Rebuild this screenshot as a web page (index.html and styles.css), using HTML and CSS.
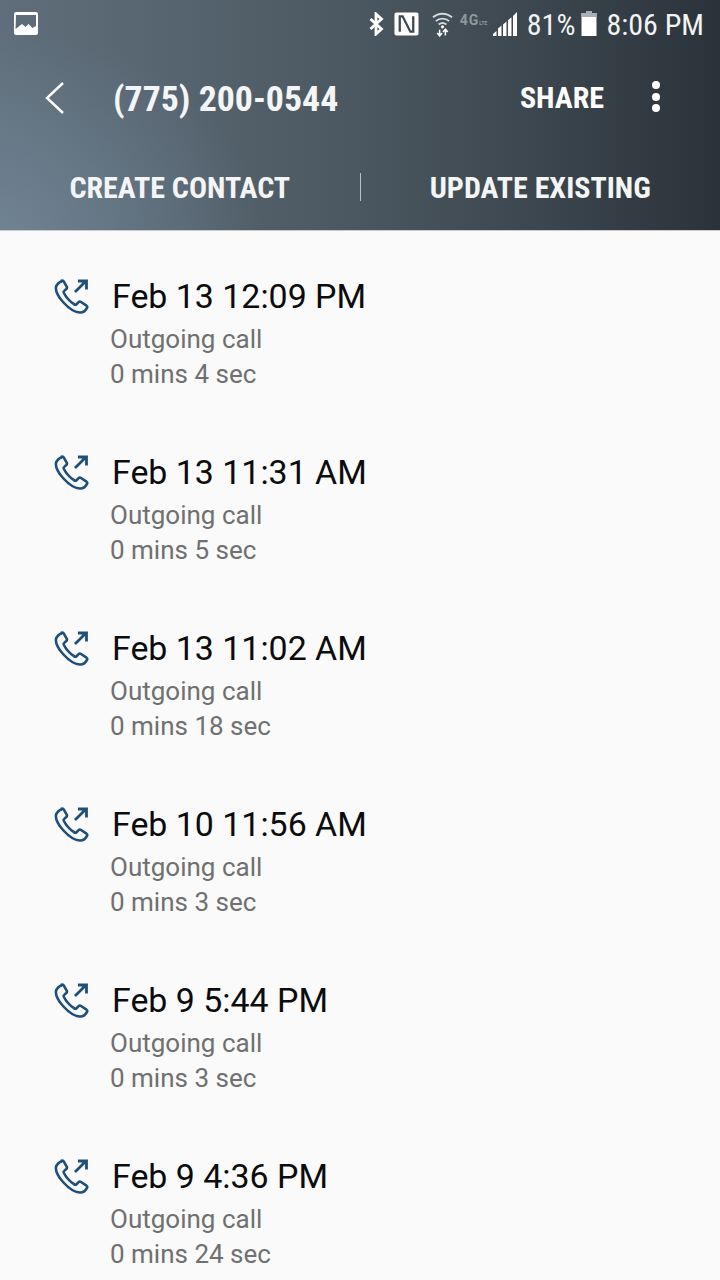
FILE: index.html
```html
<!DOCTYPE html>
<html lang="en">
<head>
  <meta charset="UTF-8" />
  <meta name="viewport" content="width=device-width, initial-scale=1.0" />
  <title>Call history</title>
  <link rel="stylesheet" href="styles.css">
</head>
<body>
  <header class="top">
    <div class="status">
      <svg class="pic-icon" width="24" height="24" viewBox="0 0 24 24">
        <rect x="0" y="0" width="24" height="23" rx="2" fill="#fff"/>
        <path d="M2 3h20v11l-3.500 2-4-4-3 3-3.500-3-6.500 5z" fill="#5d6c78"/>
      </svg>
      <div class="status-right">
        <svg class="ic-bt" width="17" height="24" viewBox="0 0 16 24">
          <path d="M2 7l11 10-5.500 5V2L13 7 2 17" fill="none" stroke="#fff" stroke-width="2.800"/>
        </svg>
        <svg class="ic-nfc" width="25" height="26" viewBox="0 0 26 24">
          <rect x="0.500" y="0" width="25" height="24" rx="2" fill="#fff"/>
          <path d="M6 20V4h3l8 16h3V4" fill="none" stroke="#3e4a53" stroke-width="2.400"/>
        </svg>
        <svg class="ic-wifi" width="21" height="26" viewBox="0 0 22 26">
          <path d="M1 6c6-5 14-5 20 0M4 10c4-3.500 10-3.500 14 0M7 13.500c2.500-2 5.500-2 8 0" fill="none" stroke="#d5d9dc" stroke-width="2"/>
          <circle cx="11" cy="16" r="1.600" fill="#fff"/>
          <path d="M8 19v6M5.500 22.500l2.500 3 2.500-3M14 25v-6M11.500 21.500l2.500-3 2.500 3" fill="none" stroke="#fff" stroke-width="1.600"/>
        </svg>
        <span class="net">4G<small>LTE</small></span>
        <svg class="ic-signal" width="24" height="24" viewBox="0 0 24 24">
          <path d="M0 24v-2l3.500-3v5zM5 24v-7.500l3.500-3V24zM10 24V12.500l3.500-3V24zM15 24V8.200l3.500-3V24zM20 24V3.900L24 0v24z" fill="#fff"/>
        </svg>
        <span class="stat-text pct">81%</span>
        <svg class="ic-batt" width="16" height="26" viewBox="0 0 16 26">
          <path d="M5 0h6v2h4.500v23H.5V2H5z" fill="#fff"/>
          <path d="M5 0h6v2h4.500v4H.5V2H5z" fill="#a9b0b5"/>
        </svg>
        <span class="stat-text">8:06 PM</span>
      </div>
    </div>

    <div class="bar">
      <svg class="back" width="20" height="32" viewBox="0 0 20 32">
        <path d="M18 1L2 16l16 15" fill="none" stroke="#fff" stroke-width="2.400"/>
      </svg>
      <h1 class="number">(775) 200-0544</h1>
      <span class="share">SHARE</span>
      <div class="more"><i></i><i></i><i></i></div>
    </div>

    <div class="actions">
      <span class="action">CREATE CONTACT</span>
      <span class="divider"></span>
      <span class="action">UPDATE EXISTING</span>
    </div>
  </header>

  <main class="log">
    <div class="call">
      <svg class="call-icon" viewBox="0 0 36 36"><use href="#outgoing"/></svg>
      <div>
        <div class="when">Feb 13 12:09 PM</div>
        <div class="sub">Outgoing call</div>
        <div class="sub">0 mins 4 sec</div>
      </div>
    </div>
    <div class="call">
      <svg class="call-icon" viewBox="0 0 36 36"><use href="#outgoing"/></svg>
      <div>
        <div class="when">Feb 13 11:31 AM</div>
        <div class="sub">Outgoing call</div>
        <div class="sub">0 mins 5 sec</div>
      </div>
    </div>
    <div class="call">
      <svg class="call-icon" viewBox="0 0 36 36"><use href="#outgoing"/></svg>
      <div>
        <div class="when">Feb 13 11:02 AM</div>
        <div class="sub">Outgoing call</div>
        <div class="sub">0 mins 18 sec</div>
      </div>
    </div>
    <div class="call">
      <svg class="call-icon" viewBox="0 0 36 36"><use href="#outgoing"/></svg>
      <div>
        <div class="when">Feb 10 11:56 AM</div>
        <div class="sub">Outgoing call</div>
        <div class="sub">0 mins 3 sec</div>
      </div>
    </div>
    <div class="call">
      <svg class="call-icon" viewBox="0 0 36 36"><use href="#outgoing"/></svg>
      <div>
        <div class="when">Feb 9 5:44 PM</div>
        <div class="sub">Outgoing call</div>
        <div class="sub">0 mins 3 sec</div>
      </div>
    </div>
    <div class="call">
      <svg class="call-icon" viewBox="0 0 36 36"><use href="#outgoing"/></svg>
      <div>
        <div class="when">Feb 9 4:36 PM</div>
        <div class="sub">Outgoing call</div>
        <div class="sub">0 mins 24 sec</div>
      </div>
    </div>
  </main>

  <svg class="defs" width="0" height="0">
    <symbol id="outgoing" viewBox="0 0 36 36">
      <path d="M7.500 2.500c-2 .5-5 3-5.500 5.500-.5 4 2.500 10 7.500 15.500s11 9.500 16 10c3 .3 6-2 7.500-4.500.5-1 .2-1.800-.5-2.300l-5.500-3.700c-.9-.6-1.700-.5-2.400.2l-2.100 2.100c-.6.6-1.300.6-2 .2-2.500-1.500-4.500-3.200-6.500-5.500-1.800-2-3.200-4-4.200-6.200-.3-.8-.2-1.400.4-1.900l2.100-1.900c.7-.7.8-1.500.4-2.300l-3-5.300c-.5-.9-1.300-1-2.200-.6z" fill="none" stroke="#1f4e79" stroke-width="2.600" stroke-linejoin="round"/>
      <path d="M21 13L32 2M24 2h8.500v8.500" fill="none" stroke="#1f4e79" stroke-width="2.800"/>
    </symbol>
  </svg>
</body>
</html>
```

FILE: styles.css
```css
body {
  margin: 0;
  background-color: #fafafa;
  font-family: Roboto, "Liberation Sans", sans-serif;
}
.top {
  height: 230px;
  background:
    radial-gradient(ellipse 260px 200px at 0 100%, rgba(125, 148, 168, 0.55), rgba(125, 148, 168, 0)),
    linear-gradient(90deg, #5f6e7a 0%, #56646f 25%, #4b5760 50%, #3d4850 72%, #2b333a 100%);
  border-bottom: 1px solid #c9cbcc;
  color: #fff;
}
.status {
  height: 48px;
  display: flex;
  align-items: center;
  justify-content: space-between;
  padding: 0 16px 0 14px;
}
.status-right {
  display: flex;
  align-items: center;
}
.ic-bt { margin-right: 9px; }
.ic-nfc { margin-right: 13px; }
.ic-wifi { margin-right: 7px; }
.ic-signal { margin-right: 10px; }
.net {
  font-size: 14px;
  font-weight: 700;
  letter-spacing: 1px;
  color: #8f989e;
  width: 33px;
  margin-top: -8px;
}
.net small {
  font-size: 5px;
  letter-spacing: 0;
}
.stat-text {
  font-size: 30px;
  font-stretch: 75%;
  color: #f2f3f4;
}
.pct { margin-right: 6px; }
.ic-batt { margin-right: 9px; }
.bar {
  height: 96px;
  display: flex;
  align-items: center;
  padding: 2px 60px 0 45px;
}
.back { margin-right: 48px; }
.number {
  margin: 1px 0 0;
  flex: 1;
  font-size: 35.800px;
  font-weight: 700;
  font-stretch: 75%;
  color: #f4f5f6;
}
.share {
  font-size: 30px;
  font-weight: 700;
  font-stretch: 75%;
  margin: -2px 48px 0 0;
}
.more {
  display: flex;
  flex-direction: column;
  gap: 3.500px;
  margin-top: -3px;
}
.more i {
  width: 8px;
  height: 8px;
  border-radius: 50%;
  background: #fff;
}
.actions {
  height: 86px;
  display: flex;
  align-items: center;
  padding-bottom: 5px;
  box-sizing: border-box;
}
.action {
  flex: 1;
  margin-top: 2px;
  text-align: center;
  font-size: 30px;
  font-weight: 700;
  font-stretch: 75%;
  color: #f4f5f6;
}
.divider {
  width: 1px;
  height: 28px;
  background: #b9bfc4;
}
.call {
  height: 176px;
  box-sizing: border-box;
  display: flex;
  padding: 45px 0 0 54px;
}
.call-icon {
  width: 36px;
  height: 36px;
  margin: 3px 20px 0 0;
}
.when {
  font-size: 33.900px;
  line-height: 40px;
  color: #0c0c0c;
  margin: 1px 0 5px 2px;
}
.sub {
  font-size: 26px;
  line-height: 35px;
  color: #707070;
}
.defs {
  position: absolute;
}
```
